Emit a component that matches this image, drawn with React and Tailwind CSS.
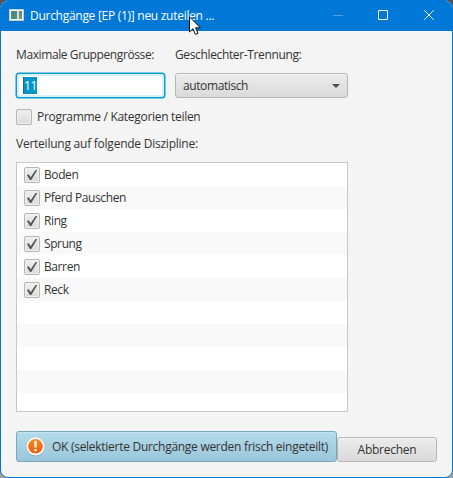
import React from 'react';

const disciplines = ['Boden', 'Pferd Pauschen', 'Ring', 'Sprung', 'Barren', 'Reck', '', '', '', '', ''];

function CheckBox({ checked }) {
  return (
    <span className="flex h-4 w-4 shrink-0 items-center justify-center rounded-[2px] border border-[#b5b5b5] bg-gradient-to-b from-[#efefef] to-[#dadada] shadow-[inset_0_0_0_1px_#f0f0f0]">
      {checked && (
        <svg className="h-3 w-3 shrink-0" viewBox="0 0 12 12">
          <path d="M0.9 6 L2.7 5.2 L4.7 8.2 L9.6 1 L11.3 1 L5.3 11 L4 11 Z" fill="#555" />
        </svg>
      )}
    </span>
  );
}

function AppIcon() {
  return (
    <svg className="h-4 w-4 shrink-0" viewBox="0 0 16 16">
      <defs>
        <linearGradient id="pane" x1="0" y1="0" x2="1" y2="1">
          <stop offset="0" stopColor="#4b7d9c" />
          <stop offset="1" stopColor="#4f9a63" />
        </linearGradient>
        <linearGradient id="strip" x1="0" y1="0" x2="0" y2="1">
          <stop offset="0" stopColor="#5f7f8c" />
          <stop offset="1" stopColor="#6aa27a" />
        </linearGradient>
      </defs>
      <rect x="0.5" y="1.5" width="14" height="11" fill="#f4f4f4" stroke="#c9cdd0" />
      <rect x="2" y="3" width="6" height="8" fill="url(#pane)" />
      <rect x="8" y="3" width="2" height="8" fill="#d9dfe0" />
      <rect x="10" y="3" width="3" height="8" fill="url(#strip)" />
    </svg>
  );
}

function AlertIcon() {
  return (
    <svg className="h-5 w-5 shrink-0" viewBox="0 0 20 20">
      <defs>
        <linearGradient id="alert" x1="0" y1="0" x2="0" y2="1">
          <stop offset="0" stopColor="#fb8a1e" />
          <stop offset="1" stopColor="#ea5a0c" />
        </linearGradient>
      </defs>
      <circle cx="9.5" cy="9.7" r="9.5" fill="#7f8f96" opacity="0.4" />
      <circle cx="9.5" cy="9.3" r="9" fill="#fff" />
      <circle cx="9.5" cy="9.3" r="7.3" fill="url(#alert)" />
      <path d="M8.2 4 h2.6 l-0.3 6.6 h-2 Z" fill="#fff" />
      <rect x="8.3" y="11.9" width="2.4" height="2.4" rx="0.6" fill="#fff" />
    </svg>
  );
}

export default function App() {
  return (
    <div className="relative h-[478px] w-[453px] overflow-hidden bg-gradient-to-b from-[#5b5350] to-[#a3a3a3] font-['Open_Sans','Noto_Sans',sans-serif] text-[12px] leading-4 whitespace-nowrap text-[#333]">
      <div className="flex h-full flex-col overflow-hidden rounded-[8px] border border-[#0078d7] bg-[#f4f4f4]">
        <header className="flex h-[30px] shrink-0 items-center bg-[#0078d7] pl-2 text-white">
          <AppIcon />
          <span className="ml-[5px] tracking-[-0.28px]">Durchgänge [EP (1)] neu zuteilen ...</span>
          <svg className="ml-auto h-[30px] w-[122px] shrink-0" viewBox="330 1 122 30" fill="none">
            <path d="M333 15.5h10" stroke="#4da1e3" />
            <rect x="378.5" y="10.5" width="9" height="9" rx="0.5" stroke="#fff" />
            <path d="M424.3 10.3l9.4 9.4M433.7 10.3l-9.4 9.4" stroke="#fff" />
          </svg>
        </header>

        <main className="flex flex-col pl-[15px]">
          <div className="mt-4 flex h-4">
            <span className="w-[159px] tracking-[-0.4px]">Maximale Gruppengrösse:</span>
            <span className="tracking-[-0.36px]">Geschlechter-Trennung:</span>
          </div>
          <div className="mt-[10px] flex gap-[10px]">
            <div className="flex h-[25px] w-[149px] items-center rounded-[3px] border border-[#039ed3] bg-white pl-[6px] shadow-[inset_0_0_0_2px_#d8eff8,0_0_0_0.5px_#039ed3]">
              <span className="flex h-[17px] w-[14px] items-center border-l border-[#555] bg-[#0096c9] tracking-[-0.4px] text-white">11</span>
            </div>
            <div className="flex h-[25px] w-[173px] items-center justify-between rounded-[3px] border border-[#b5b5b5] bg-gradient-to-b from-[#ececec] to-[#dadada] pr-[7px] pl-[7px] shadow-[inset_0_1px_0_#f8f8f8]">
              <span className="tracking-[-0.4px]">automatisch</span>
              <svg className="h-1 w-2" viewBox="0 0 8 4">
                <path d="M0 0h8L4 4Z" fill="#4c4c4c" />
              </svg>
            </div>
          </div>
          <div className="mt-[11px] flex h-4 items-center gap-[5px]">
            <CheckBox />
            <span className="tracking-[-0.3px]">Programme / Kategorien teilen</span>
          </div>
          <span className="mt-[11px] tracking-[-0.24px]">Verteilung auf folgende Diszipline:</span>
          <div className="mt-[10px] h-[250px] w-[332px] overflow-hidden border border-[#c8c8c8] bg-white">
            {disciplines.map((name, i) => (
              <div key={i} className="flex h-[23px] items-center gap-1 pt-px pl-[7px] odd:bg-white even:bg-[#f9f9f9]">
                {name && <CheckBox checked />}
                <span className="tracking-[-0.4px]">{name}</span>
              </div>
            ))}
          </div>
          <div className="mt-[19px] flex items-end">
            <button className="flex h-[31px] w-[321px] items-center rounded-[3px] border border-[#78a7c0] bg-gradient-to-b from-[#b3dbeb] to-[#9bc6da] pl-[9px] shadow-[inset_0_1px_0_#c4e4f0]">
              <AlertIcon />
              <span className="ml-[6px] tracking-[-0.28px]">OK (selektierte Durchgänge werden frisch eingeteilt)</span>
            </button>
            <button className="flex h-[25px] w-[100px] items-center justify-center rounded-[3px] border border-[#b5b5b5] bg-gradient-to-b from-[#ececec] to-[#dadada] shadow-[inset_0_1px_0_#f8f8f8]">
              <span className="tracking-[-0.25px]">Abbrechen</span>
            </button>
          </div>
        </main>
      </div>
      <svg className="absolute top-[16px] left-[189px] h-5 w-3" viewBox="0 0 12 20">
        <path d="M0.5 0.8V16L4 12.7L6.4 18.4L9 17.3L6.6 11.8H11.3Z" fill="#fff" stroke="#111" />
      </svg>
    </div>
  );
}
